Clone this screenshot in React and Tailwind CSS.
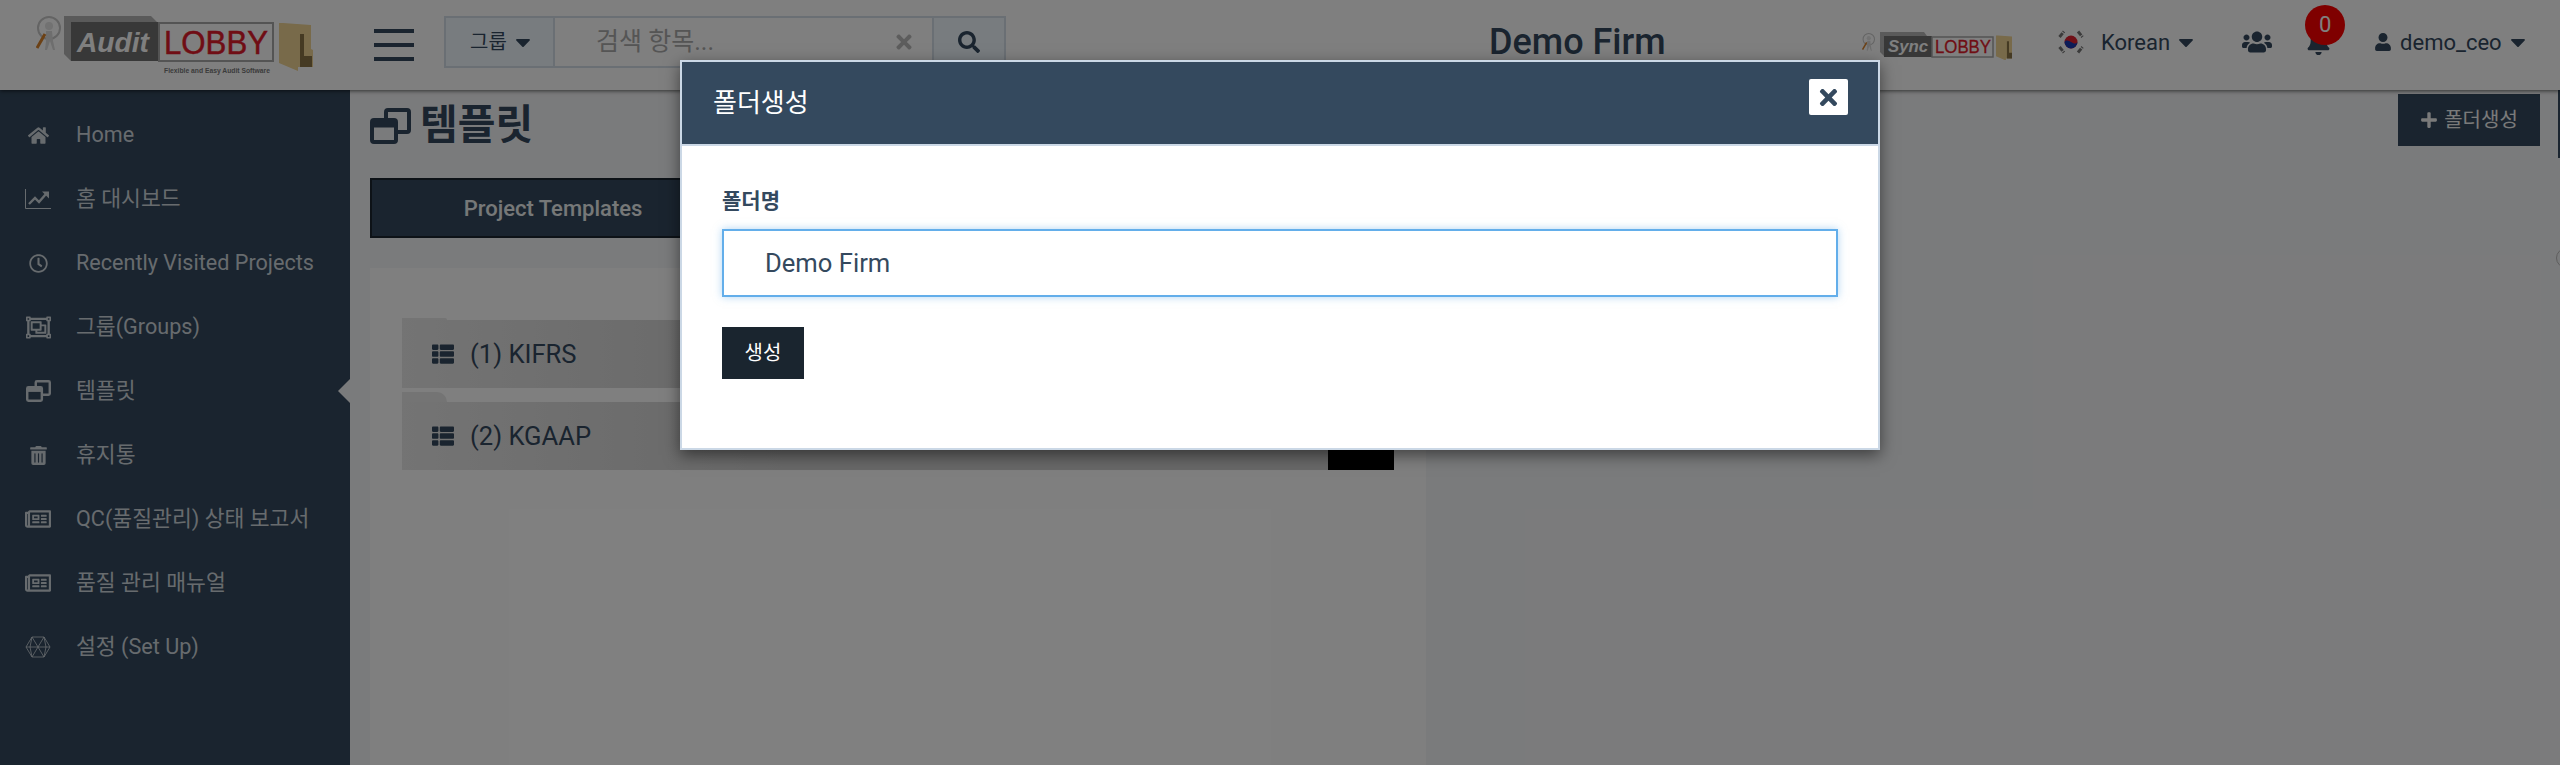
import React from 'react';
import {
  FaHome, FaRegClock, FaRegObjectGroup, FaTrashAlt, FaRegNewspaper,
  FaThList, FaSearch, FaTimes, FaCaretDown, FaUsers, FaBell, FaUser, FaPlus,
} from 'react-icons/fa';

const FONT = 'font-[Roboto,"Noto_Sans_CJK_KR",sans-serif]';

function Hexagon({ className }) {
  return (
    <svg viewBox="0 0 26 22" className={className} fill="none" stroke="currentColor" strokeWidth="0.8">
      <path d="M7 1h12l6 10-6 10H7L1 11z" />
      <path d="M7 1l12 20M19 1L7 21M1 11h24M7 1l-2 10 2 10M19 1l2 10-2 10" />
    </svg>
  );
}

function ChartIcon({ className }) {
  return (
    <svg viewBox="0 0 26 20" className={className} fill="none" stroke="currentColor">
      <path d="M0.500 0v19.500H26" strokeWidth="1" />
      <path d="M4 15l6-6 4 4 7-8" strokeWidth="2.400" />
      <path d="M17 2.500h7v7z" fill="currentColor" stroke="none" />
    </svg>
  );
}

function RestoreIcon({ className }) {
  return (
    <svg viewBox="0 0 41 36" className={className} fill="none" stroke="currentColor" strokeWidth="4">
      <path d="M16 10V4a2 2 0 0 1 2-2h19a2 2 0 0 1 2 2v18a2 2 0 0 1-2 2h-11" />
      <rect x="2" y="12" width="24" height="22" rx="2" />
      <path d="M2 16h24" strokeWidth="7" />
    </svg>
  );
}

function Person({ x, y, s }) {
  return (
    <g transform={`translate(${x} ${y}) scale(${s})`}>
      <circle cx="13" cy="12" r="11" fill="none" stroke="#c8c8c8" strokeWidth="2" />
      <circle cx="13" cy="10" r="4" fill="#e4e4e4" />
      <path d="M10 15h6l1 10 2 9h-2l-3-9-3 9H9l1-9z" fill="#dcdcdc" />
      <path d="M9 18L1 32" stroke="#d9822b" strokeWidth="3" />
    </g>
  );
}

function Folder({ x, y, s }) {
  return (
    <g transform={`translate(${x} ${y}) scale(${s})`}>
      <path d="M4 1l28 2v24l2 1v17l-15 0v4L0 41V1z" fill="#f0d494" />
      <path d="M21 12h4v22h8v11H21z" fill="#8a7547" />
    </g>
  );
}

function AuditLogo() {
  return (
    <svg viewBox="0 0 280 60" className="w-[280px] h-[60px]">
      <Person x={0} y={0} s={1} />
      <path d="M28 0h87l6 6H35v39l-7-7z" fill="#b4b4b4" />
      <rect x="35" y="6" width="88" height="39" fill="#707070" />
      <rect x="123" y="7" width="114" height="38" fill="#fff" stroke="#a8a8a8" strokeWidth="2" />
      <text x="41" y="36" fontFamily="Liberation Sans" fontStyle="italic" fontWeight="700" fontSize="27" textLength="72" lengthAdjust="spacingAndGlyphs" fill="#fff">Audit</text>
      <text x="128" y="38" fontFamily="Liberation Sans" fontSize="33" textLength="104" lengthAdjust="spacingAndGlyphs" fill="#e01a2a" stroke="#e01a2a" strokeWidth="0.5">LOBBY</text>
      <text x="128" y="57" fontFamily="Liberation Sans" fontWeight="700" fontSize="7.5" textLength="106" lengthAdjust="spacingAndGlyphs" fill="#777">Flexible and Easy Audit Software</text>
      <Folder x={243} y={6} s={1} />
    </svg>
  );
}

function SyncLogo() {
  return (
    <svg viewBox="0 0 150 30" className="w-[150px] h-[30px]">
      <Person x={0} y={3} s={0.52} />
      <path d="M18 2h44l3 4H22v20l-4-4z" fill="#b4b4b4" />
      <rect x="22" y="6" width="48" height="21" fill="#707070" />
      <rect x="70" y="7" width="61" height="20" fill="#fff" stroke="#a8a8a8" strokeWidth="1.5" />
      <text x="26" y="22" fontFamily="Liberation Sans" fontStyle="italic" fontWeight="700" fontSize="17" textLength="40" lengthAdjust="spacingAndGlyphs" fill="#fff">Sync</text>
      <text x="73" y="23" fontFamily="Liberation Sans" fontSize="18" textLength="56" lengthAdjust="spacingAndGlyphs" fill="#e01a2a" stroke="#e01a2a" strokeWidth="0.3">LOBBY</text>
      <Folder x={134} y={5} s={0.52} />
    </svg>
  );
}

function KoreaFlag() {
  return (
    <svg viewBox="0 0 26 26" className="w-[26px] h-[26px]">
      <circle cx="13" cy="13" r="6.5" fill="#e02030" />
      <path d="M6.5 13a6.5 6.5 0 0 0 13 0c-2 3-4.500 1-6.500 0s-4.500-3-6.500 0z" fill="#1838b0" />
      <g stroke="#777" strokeWidth="3" strokeDasharray="5 1">
        <path d="M1.500 8L6 2.500M20 2.500L24.500 8M1.500 18L6 23.500M20 23.500L24.500 18" />
      </g>
    </svg>
  );
}

const menu = [
  { label: 'Home', icon: <FaHome className="text-[21px]" /> },
  { label: '홈 대시보드', icon: <ChartIcon className="h-[20px] w-[26px]" /> },
  { label: 'Recently Visited Projects', icon: <FaRegClock className="text-[19px]" /> },
  { label: '그룹(Groups)', icon: <FaRegObjectGroup className="text-[25px]" /> },
  { label: '템플릿', icon: <RestoreIcon className="h-[22px] w-[25px]" />, active: true },
  { label: '휴지통', icon: <FaTrashAlt className="text-[19px]" /> },
  { label: 'QC(품질관리) 상태 보고서', icon: <FaRegNewspaper className="text-[26px]" /> },
  { label: '품질 관리 매뉴얼', icon: <FaRegNewspaper className="text-[26px]" /> },
  { label: '설정 (Set Up)', icon: <Hexagon className="h-[22px] w-[26px]" /> },
];

function Sidebar() {
  return (
    <aside className="w-[350px] shrink-0 bg-[#34495e] pt-[13px] text-[#cfd6dc]">
      {menu.map(item => (
        <div key={item.label} className="relative flex h-16 items-center text-[21.6px]">
          <span className="flex w-[76px] shrink-0 justify-center">{item.icon}</span>
          <span>{item.label}</span>
          {item.active && (
            <span className="absolute right-0 top-[20px] border-y-[12px] border-r-[12px] border-y-transparent border-r-[#f5f6f8]"></span>
          )}
        </div>
      ))}
    </aside>
  );
}

function FolderRow({ name, tab, children }) {
  return (
    <div>
      <div className={`w-[45px] rounded-tr-[12px] bg-[#e8e8e8] ${tab}`}></div>
      <div className="relative flex h-[68px] items-center bg-gradient-to-r from-[#e8e8e8] to-[#d0d0d0] to-40% pl-[30px] text-[25.6px] text-[#34495e]">
        <FaThList className="mr-[16px] text-[22px]" />
        {name}
        {children}
      </div>
    </div>
  );
}

export default function App() {
  return (
    <div className={`relative flex h-screen flex-col overflow-hidden bg-[#f5f6f8] text-[#34495e] ${FONT}`}>
      <header className="relative z-10 flex h-[90px] shrink-0 items-center bg-white shadow-[0_1px_4px_rgba(0,0,0,0.6)]">
        <div className="ml-[36px] mt-[2px] w-[280px]"><AuditLogo /></div>
        <div className="ml-[58px] flex w-[40px] flex-col gap-[10px]">
          <span className="h-[4px] bg-[#34495e]"></span>
          <span className="h-[4px] bg-[#34495e]"></span>
          <span className="h-[4px] bg-[#34495e]"></span>
        </div>
        <div className="-mt-[6px] ml-[30px] flex h-[52px] w-[562px] border-2 border-[#d4dee8]">
          <div className="flex w-[109px] items-center justify-center gap-[4px] border-r-2 border-[#d4dee8] bg-[#f0f8ff] pl-[6px] text-[20px]">
            그룹 <FaCaretDown className="text-[24px]" />
          </div>
          <div className="flex flex-1 items-center pl-[41px] pr-[17px] text-[25px] text-[#aaa]">
            <span className="flex-1">검색 항목...</span>
            <FaTimes className="text-[22px] text-[#bbb]" />
          </div>
          <div className="flex w-[72px] items-center justify-center border-l-2 border-[#d4dee8] bg-[#f0f8ff]">
            <FaSearch className="text-[22px]" />
          </div>
        </div>
        <div className="-mt-[6px] ml-[483px] w-[178px] whitespace-nowrap text-[36px] font-medium leading-none">Demo Firm</div>
        <div className="ml-[195px] w-[150px]"><SyncLogo /></div>
        <div className="-mt-[6px] ml-[46px]"><KoreaFlag /></div>
        <span className="-mt-[6px] ml-[17px] text-[22px]">Korean</span>
        <FaCaretDown className="-mt-[6px] ml-[4px] text-[24px]" />
        <FaUsers className="-mt-[6px] ml-[44px] text-[30px]" />
        <div className="relative -mt-[6px] ml-[34px]">
          <FaBell className="text-[25px]" />
          <span className="absolute -top-[25px] left-[-1px] flex h-[40px] w-[40px] items-center justify-center rounded-full bg-[#ff0000] text-[22px] text-white">0</span>
        </div>
        <FaUser className="-mt-[6px] ml-[43px] text-[18px]" />
        <span className="-mt-[6px] ml-[8px] text-[22px]">demo_ceo</span>
        <FaCaretDown className="-mt-[6px] ml-[4px] text-[24px]" />
      </header>

      <div className="relative flex flex-1">
        <Sidebar />
        <main className="flex-1 pl-[20px]">
          <div className="flex h-[88px] items-start justify-between pr-[20px]">
            <h1 className="mt-[15px] flex items-center gap-[9px] text-[41px] font-bold leading-none">
              <RestoreIcon className="h-[36px] w-[41px]" />
              템플릿
            </h1>
            <button className="mt-[4px] flex h-[52px] w-[142px] items-center justify-center gap-[6px] bg-[#34495e] text-[20px] text-[#f5f5f5]">
              <FaPlus className="text-[18px]" />
              폴더생성
            </button>
          </div>
          <div className="flex">
            <div className="flex h-[60px] w-[366px] items-center justify-center border-2 border-[#1a252f] bg-[#34495e] text-[22px] font-medium text-[#ecf0f1]">
              Project Templates
            </div>
          </div>
          <section className="mt-[30px] h-[600px] w-[1056px] bg-white px-[32px] pt-[50px]">
            <div className="flex flex-col gap-[4px]">
              <FolderRow name="(1) KIFRS" tab="h-[2px]" />
              <FolderRow name="(2) KGAAP" tab="h-[10px]">
                <span className="absolute bottom-0 right-0 h-[30px] w-[66px] bg-black"></span>
              </FolderRow>
            </div>
          </section>
        </main>
        <span className="absolute right-0 top-0 h-[68px] w-[2px] bg-[#34495e]"></span>
        <span className="absolute -right-[16px] top-[158px] h-[20px] w-[20px] rounded-full border border-[#bbb]"></span>
      </div>

      <div className="absolute inset-0 z-20 flex justify-center bg-black/50 pt-[60px]">
        <div className="h-[390px] w-[1200px] border-2 border-[#cbd8e6] bg-white shadow-[0_5px_15px_rgba(0,0,0,0.5)]">
          <div className="flex h-[84px] items-center justify-between border-b-2 border-[#cbd8e6] bg-[#34495e] pl-[31px] pr-[30px]">
            <span className="text-[26px] text-white">폴더생성</span>
            <button className="mb-[12px] flex h-[36px] w-[39px] items-center justify-center rounded-[2px] bg-white text-[#34495e]">
              <FaTimes className="text-[25px]" />
            </button>
          </div>
          <div className="px-[40px] pt-[39px]">
            <label className="block text-[21px] font-bold leading-[32px]">폴더명</label>
            <input
              readOnly
              value="Demo Firm"
              className="mt-[12px] block h-[68px] w-full border-2 border-[#63aeea] pl-[41px] text-[25.6px] text-[#34495e] shadow-[0_0_8px_rgba(99,174,234,0.5)] outline-none"
            />
            <button className="mt-[30px] h-[52px] w-[82px] bg-[#1a252f] text-[20px] text-white">생성</button>
          </div>
        </div>
      </div>
    </div>
  );
}
